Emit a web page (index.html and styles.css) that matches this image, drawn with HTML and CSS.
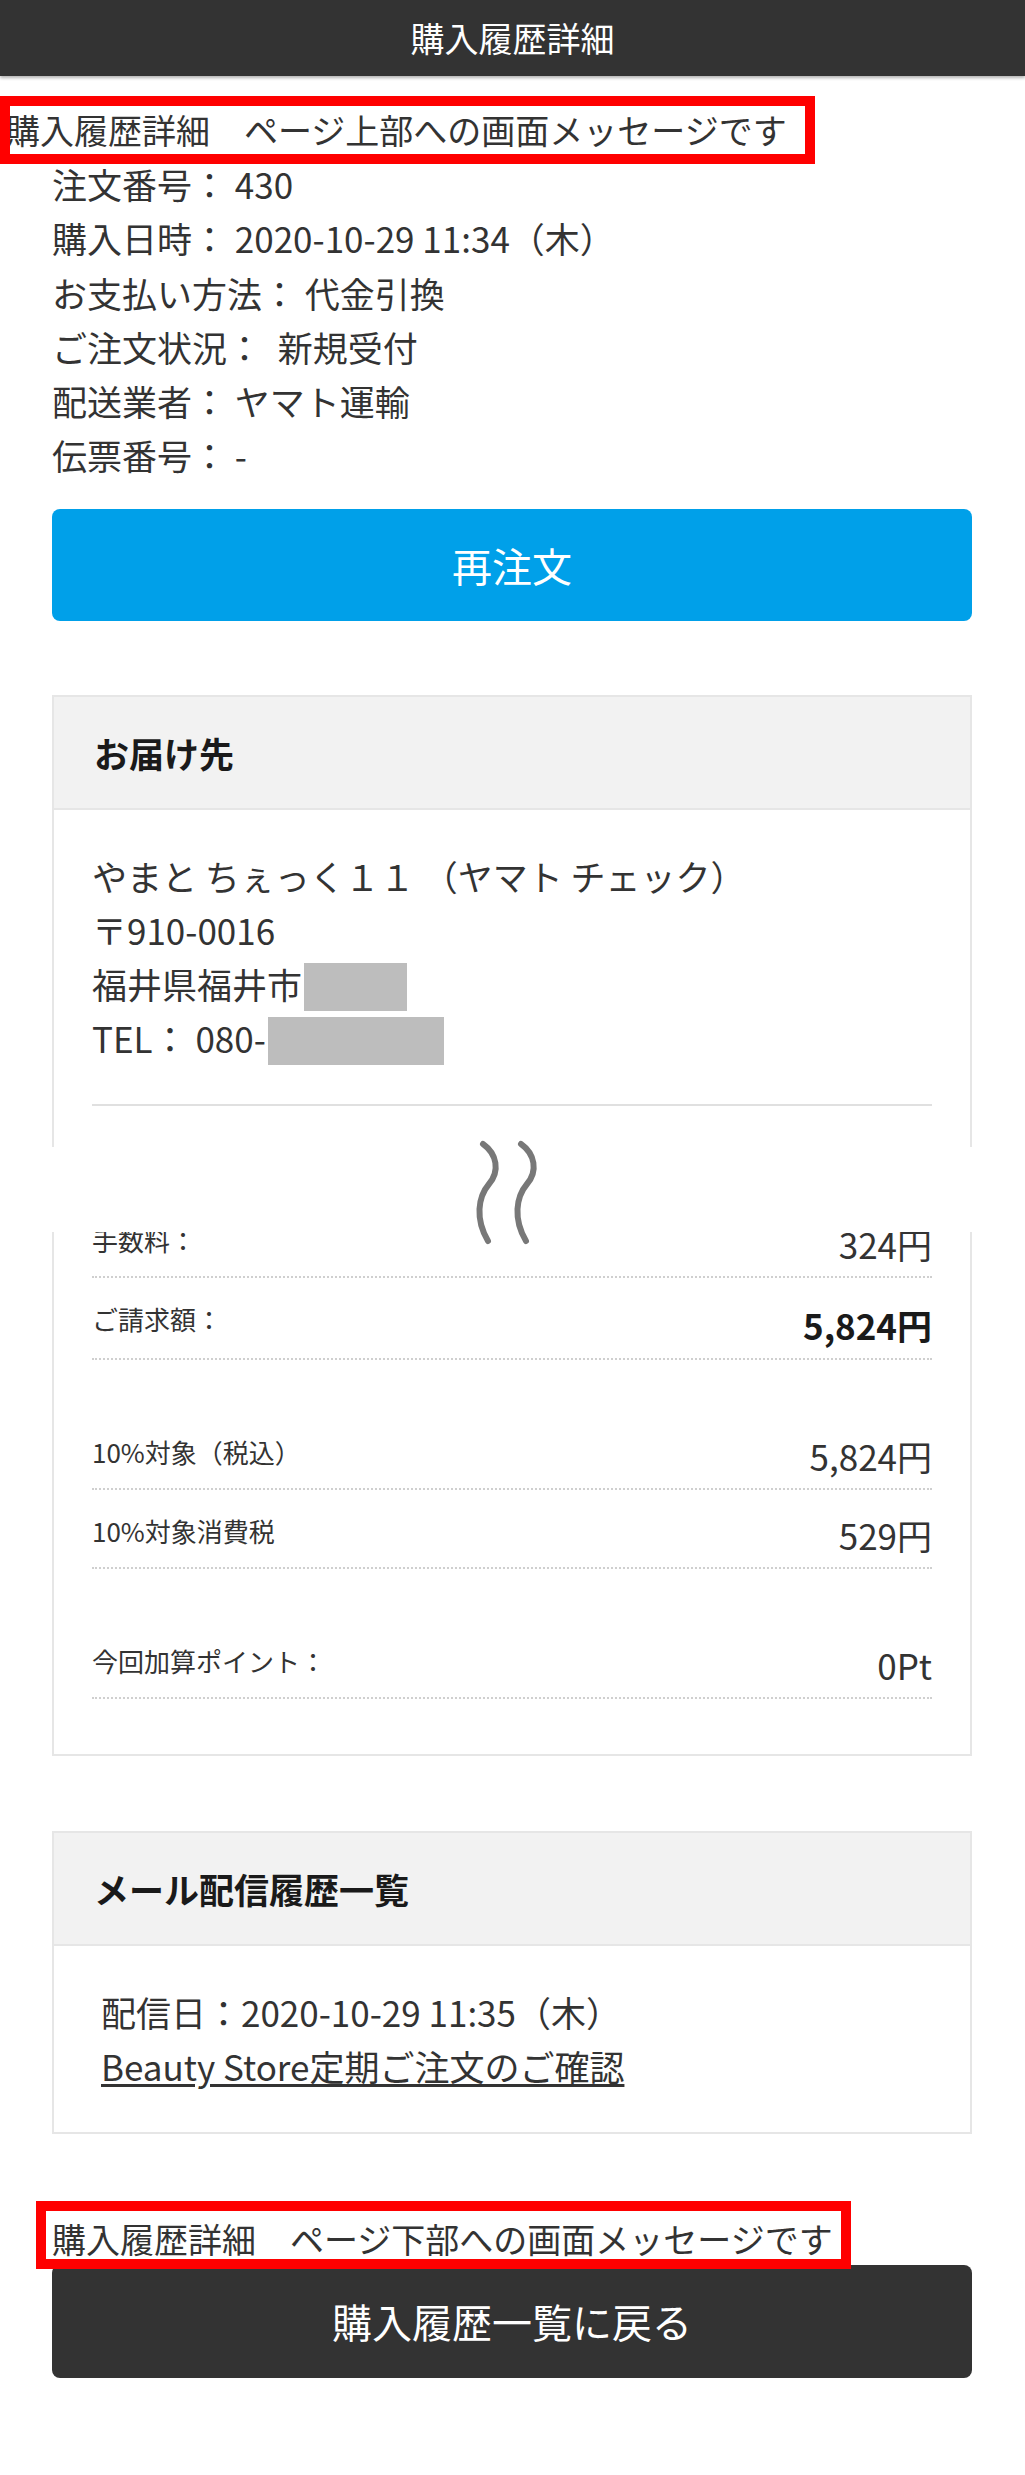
FILE: index.html
```html
<!DOCTYPE html>
<html lang="ja">
<head>
<meta charset="utf-8">
<title>購入履歴詳細</title>
<link rel="stylesheet" href="styles.css">
</head>
<body>
<header class="topbar"><h1 class="topbar__title">購入履歴詳細</h1></header>
<main class="page">
  <div class="message message--top">
    <p class="message__text">購入履歴詳細　ページ上部への画面メッセージです</p>
    <span class="annot annot--top"></span>
  </div>
  <div class="order-info">
    <p>注文番号： 430</p>
    <p>購入日時： 2020-10-29 11:34（木）</p>
    <p>お支払い方法： 代金引換</p>
    <p>ご注文状況：&nbsp; 新規受付</p>
    <p>配送業者： ヤマト運輸</p>
    <p>伝票番号： -</p>
  </div>
  <a class="btn btn--blue" href="#">再注文</a>

  <section class="card card--delivery">
    <div class="card__part card__part--top">
      <h2 class="card__head">お届け先</h2>
      <div class="card__body">
        <p>やまと ちぇっく１１ （ヤマト チェック）</p>
        <p>〒910-0016</p>
        <p>福井県福井市<span class="redact redact--city"></span></p>
        <p>TEL： 080-<span class="redact redact--tel"></span></p>
        <hr class="divider">
      </div>
    </div>
    <div class="cut">
      <svg class="cut__mark" width="70" height="110" viewBox="0 0 70 110">
        <path d="M11 5 C25 15 28 32 17 45 S3 80 16 102" />
        <path d="M49 5 C63 15 66 32 55 45 S41 80 54 102" />
      </svg>
    </div>
    <div class="card__part card__part--bottom">
      <div class="totals totals--first">
        <div class="row"><span class="row__label">手数料：</span><span class="row__value">324円</span></div>
        <div class="row row--total"><span class="row__label">ご請求額：</span><span class="row__value">5,824円</span></div>
      </div>
      <div class="totals">
        <div class="row"><span class="row__label">10%対象（税込）</span><span class="row__value">5,824円</span></div>
        <div class="row"><span class="row__label">10%対象消費税</span><span class="row__value">529円</span></div>
      </div>
      <div class="totals">
        <div class="row"><span class="row__label">今回加算ポイント：</span><span class="row__value">0Pt</span></div>
      </div>
    </div>
  </section>

  <section class="card card--mail">
    <h2 class="card__head">メール配信履歴一覧</h2>
    <div class="card__body card__body--mail">
      <p>配信日：2020-10-29 11:35（木）</p>
      <p><a class="mail-link" href="#">Beauty Store定期ご注文のご確認</a></p>
    </div>
  </section>

  <div class="message message--bottom">
    <p class="message__text">購入履歴詳細　ページ下部への画面メッセージです</p>
    <span class="annot annot--bottom"></span>
  </div>
  <a class="btn btn--dark" href="#">購入履歴一覧に戻る</a>
</main>
</body>
</html>
```
FILE: styles.css
```css
* { box-sizing: border-box; }
html, body { margin: 0; padding: 0; background: #fff; }
body {
  font-family: "Noto Sans CJK JP", "Noto Sans", sans-serif;
  color: #333;
  font-size: 35px;
}
p { margin: 0; }

.topbar {
  height: 76px;
  background: #333;
  display: flex;
  align-items: center;
  justify-content: center;
  box-shadow: 0 2px 3px rgba(0,0,0,0.3);
  position: relative;
}
.topbar__title {
  margin: 0;
  color: #fff;
  font-size: 34px;
  font-weight: normal;
  line-height: 1;
}

.page {
  padding: 0 53px 0 52px;
}

.message { position: relative; font-size: 34px; }
.message--top {
  margin: 27px 0 0 -52px;
  padding-left: 6px;
  line-height: 54px;
}
.message--bottom {
  margin-top: 79px;
  line-height: 52px;
}
.annot {
  position: absolute;
  border: 10px solid #ff0000;
  width: 815px;
  height: 68px;
  pointer-events: none;
}
.annot--top { top: -7px; left: 0; }
.annot--bottom { top: -12px; left: -16px; }

.order-info p { line-height: 54.3px; }

.btn {
  display: flex;
  align-items: center;
  justify-content: center;
  color: #fff;
  text-decoration: none;
  font-size: 40px;
  border-radius: 8px;
  height: 112px;
}
.btn--blue { background: #00a0e9; margin-top: 26px; }
.btn--dark { background: #333; height: 113px; }

.card { margin-top: 74px; }
.card--mail {
  margin-top: 75px;
  border: 2px solid #e6e6e6;
}
.card__part { border: 2px solid #e6e6e6; }
.card__part--top { border-bottom: none; }
.card__part--bottom {
  border-top: none;
  overflow: hidden;
  padding: 0 38px 55px;
}
.card__head {
  margin: 0;
  height: 113px;
  background: #f2f2f2;
  border-bottom: 2px solid #e6e6e6;
  display: flex;
  align-items: center;
  padding: 0 40px;
  font-size: 35px;
  font-weight: bold;
  color: #1a1a1a;
}
.card__body {
  padding: 39px 38px 41px;
}
.card__body p { line-height: 54px; }
.card__body--mail { padding: 39px 40px 39px 47px; }

.redact {
  display: inline-block;
  background: #bdbdbd;
  height: 48px;
  vertical-align: top;
  margin-top: 6px;
}
.redact--city { width: 103px; margin-left: 2px; }
.redact--tel { width: 176px; margin-left: 2px; }

.divider {
  border: none;
  border-top: 2px solid #e0e0e0;
  margin: 39px 0 0;
  height: 0;
}

.cut {
  position: relative;
  height: 85px;
}
.cut__mark {
  position: absolute;
  left: 420px;
  top: -8px;
  fill: none;
  stroke: #787878;
  stroke-width: 6;
  stroke-linecap: round;
  z-index: 2;
}

.totals { margin-top: 51px; }
.totals--first { margin-top: -33px; }
.row {
  display: flex;
  justify-content: space-between;
  align-items: flex-start;
  padding: 23px 0 10px;
  border-bottom: 2px dotted #cfcfcf;
}
.row__label {
  font-size: 26px;
  line-height: 36px;
}
.row__value {
  font-size: 35px;
  line-height: 44px;
}
.row--total .row__value {
  font-weight: bold;
  font-size: 35px;
  line-height: 47px;
  color: #1a1a1a;
}

.mail-link {
  color: #333;
  text-decoration: underline;
  text-underline-offset: 3px;
}
```
